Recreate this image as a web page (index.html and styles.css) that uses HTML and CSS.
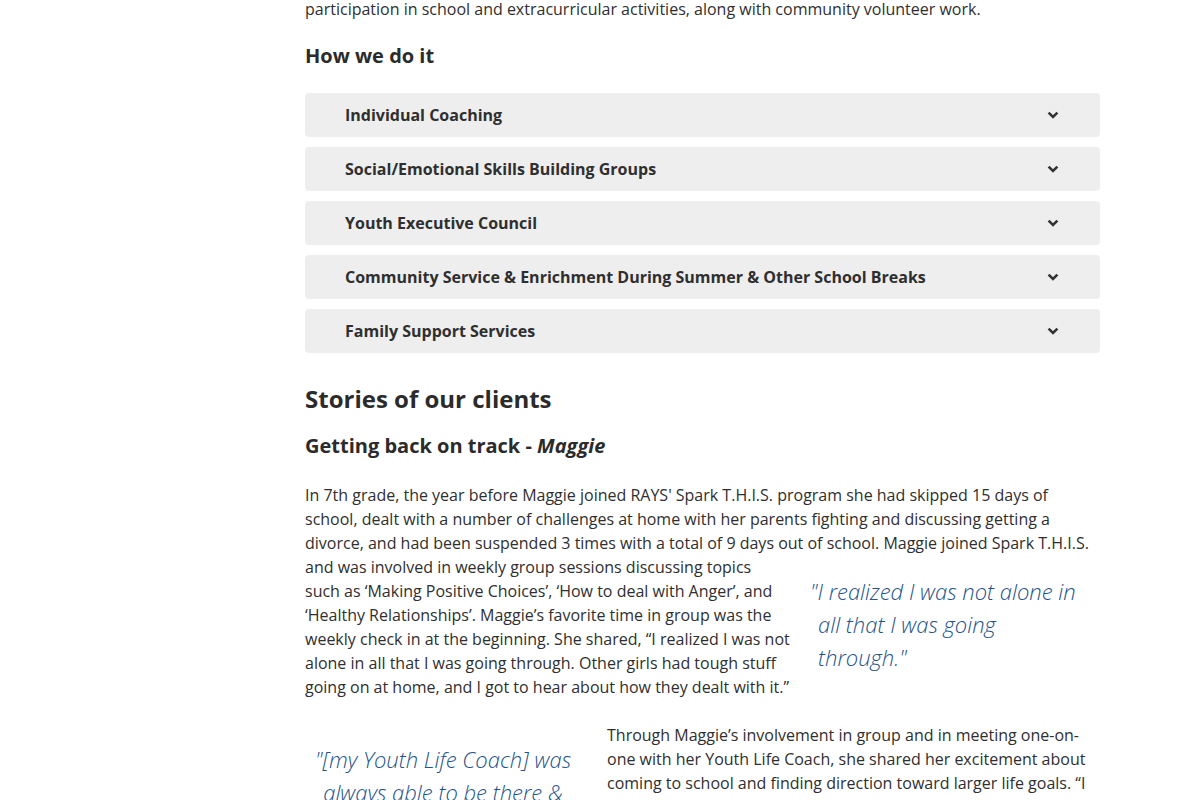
FILE: index.html
```html
<!DOCTYPE html>
<html lang="en">
<head>
<meta charset="utf-8">
<title>How we do it</title>
<link rel="stylesheet" href="styles.css">
</head>
<body>
<div class="page">
  <aside class="sidebar"></aside>
  <main class="content">
    <p class="intro">participation in school and extracurricular activities, along with community volunteer work.</p>

    <h3 class="section-title">How we do it</h3>

    <div class="accordion">
      <div class="acc-item"><span class="acc-label">Individual Coaching</span><svg class="chev" width="12" height="8" viewBox="0 0 12 8"><polyline points="1.6,1.6 6,6 10.4,1.6" fill="none" stroke="#333" stroke-width="2.6"/></svg></div>
      <div class="acc-item"><span class="acc-label">Social/Emotional Skills Building Groups</span><svg class="chev" width="12" height="8" viewBox="0 0 12 8"><polyline points="1.6,1.6 6,6 10.4,1.6" fill="none" stroke="#333" stroke-width="2.6"/></svg></div>
      <div class="acc-item"><span class="acc-label">Youth Executive Council</span><svg class="chev" width="12" height="8" viewBox="0 0 12 8"><polyline points="1.6,1.6 6,6 10.4,1.6" fill="none" stroke="#333" stroke-width="2.6"/></svg></div>
      <div class="acc-item"><span class="acc-label">Community Service &amp; Enrichment During Summer &amp; Other School Breaks</span><svg class="chev" width="12" height="8" viewBox="0 0 12 8"><polyline points="1.6,1.6 6,6 10.4,1.6" fill="none" stroke="#333" stroke-width="2.6"/></svg></div>
      <div class="acc-item"><span class="acc-label">Family Support Services</span><svg class="chev" width="12" height="8" viewBox="0 0 12 8"><polyline points="1.6,1.6 6,6 10.4,1.6" fill="none" stroke="#333" stroke-width="2.6"/></svg></div>
    </div>

    <h2 class="stories-title">Stories of our clients</h2>
    <h3 class="story-title">Getting back on track - <em>Maggie</em></h3>

    <p class="story">In 7th grade, the year before Maggie joined RAYS' Spark T.H.I.S. program she had skipped 15 days of school, dealt with a number of challenges at home with her parents fighting and discussing getting a divorce, and had been suspended 3 times with a total of 9 days out of school. Maggie joined Spark T.H.I.S.<span class="pull pull-right">"I realized I was not alone in all that I was going through."</span> and was involved in weekly group sessions discussing topics<br>such as ‘Making Positive Choices’, ‘How to deal with Anger’, and ‘Healthy Relationships’. Maggie’s favorite time in group was the weekly check in at the beginning. She shared, “I realized I was not alone in all that I was going through. Other girls had tough stuff going on at home, and I got to hear about how they dealt with it.”</p>

    <p class="story"><span class="pull pull-left">"[my Youth Life Coach] was always able to be there &amp; help me."</span>Through Maggie’s involvement in group and in meeting one-on-one with her Youth Life Coach, she shared her excitement about coming to school and finding direction toward larger life goals. “I know now that I want to go to college,” she said, and she began to talk with her coach about the steps she could take to get there, from keeping up her grades to joining a club at school.</p>
  </main>
</div>
</body>
</html>
```

FILE: styles.css
```css
html, body {
  margin: 0;
  padding: 0;
  background: #ffffff;
}

body {
  font-family: "Open Sans", "Noto Sans", "Liberation Sans", sans-serif;
  color: #2f2f2f;
  font-size: 16px;
  line-height: 24px;
  overflow: hidden;
}

.page {
  display: grid;
  grid-template-columns: 305px 795px;
}

.content {
  padding-top: 0;
}

p {
  margin: 0;
}

.intro {
  margin-top: -3px;
}

.section-title {
  font-size: 20px;
  line-height: 24px;
  font-weight: 700;
  margin: 23px 0 25px;
  color: #2b2b2b;
}

.accordion {
  display: flex;
  flex-direction: column;
  gap: 10px;
}

.acc-item {
  display: flex;
  align-items: center;
  justify-content: space-between;
  height: 44px;
  box-sizing: border-box;
  padding: 0 41px 0 40px;
  background: #eeeeee;
  border-radius: 4px;
}

.acc-label {
  font-size: 16px;
  font-weight: 700;
  color: #2f2f2f;
  line-height: 24px;
}

.chev {
  display: block;
}

.stories-title {
  font-size: 24px;
  line-height: 32px;
  font-weight: 700;
  margin: 30px 0 19px;
  color: #2b2b2b;
}

.story-title {
  font-size: 20px;
  line-height: 24px;
  font-weight: 700;
  margin: 0 0 25px;
  color: #2b2b2b;
}

.story-title em {
  font-style: italic;
}

.story + .story {
  margin-top: 24px;
}

.pull {
  display: block;
  font-size: 22px;
  line-height: 33px;
  font-style: italic;
  font-weight: 300;
  color: #24538a;
  box-sizing: border-box;
  padding-top: 20px;
  padding-bottom: 20px;
}

.pull-right {
  float: right;
  width: 305px;
  padding-left: 23px;
  padding-right: 22px;
  text-indent: -8px;
}

.pull-left {
  float: left;
  width: 276px;
  margin-right: 26px;
  text-align: center;
}
```
